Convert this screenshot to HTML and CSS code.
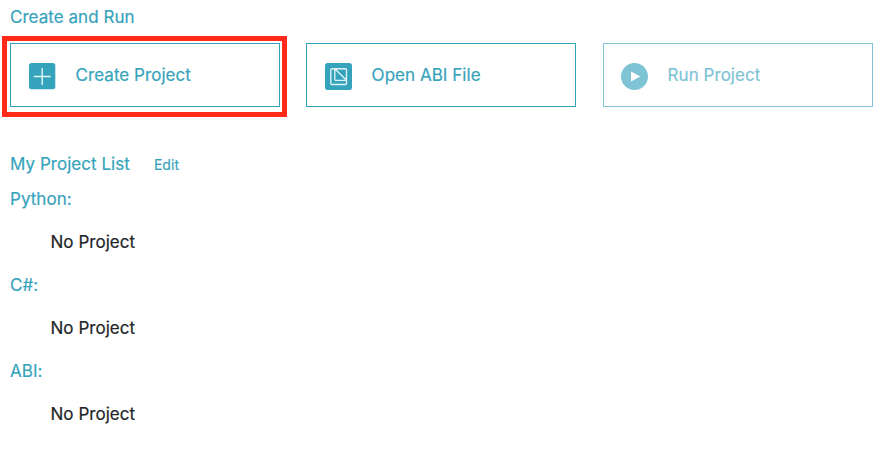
FILE: index.html
```html
<!DOCTYPE html>
<html lang="en">
<head>
<meta charset="utf-8">
<title>Projects</title>
<link rel="stylesheet" href="styles.css">
</head>
<body>
<main class="page">
  <h2 class="heading">Create and Run</h2>
  <div class="actions">
    <button class="card highlighted">
      <svg class="icon" viewBox="0 0 27 27"><rect width="26.3" height="26.3" rx="2.5" fill="#36a3bc"/><path d="M13.2 5v17M4.7 13.5h17" stroke="#e4f5f8" stroke-width="1.4" fill="none"/></svg>
      <span class="label">Create Project</span>
    </button>
    <button class="card">
      <svg class="icon" viewBox="0 0 27 27"><rect width="27" height="27" rx="2.8" fill="#36a3bc"/><path d="M9.8 5.7H7a1.2 1.2 0 0 0-1.2 1.2V20.3a1.2 1.2 0 0 0 1.2 1.2H20.3a1.2 1.2 0 0 0 1.2-1.2V17.3M9.8 5.7H20.3a1.2 1.2 0 0 1 1.2 1.2V17.3H11a1.2 1.2 0 0 1-1.2-1.2zM9.8 5.7L21.5 17.3" stroke="#e0f4f7" stroke-width="1.35" fill="none"/></svg>
      <span class="label">Open ABI File</span>
    </button>
    <button class="card disabled" disabled>
      <svg class="icon" viewBox="0 0 27 27"><circle cx="13.5" cy="13.5" r="13.5" fill="#7ec4d4"/><path d="M10 8.6v9.8l9.3-4.9z" fill="#fff"/></svg>
      <span class="label">Run Project</span>
    </button>
  </div>
  <div class="list-head">
    <h2 class="heading">My Project List</h2>
    <a class="edit">Edit</a>
  </div>
  <section class="group">
    <h3 class="heading">Python:</h3>
    <p class="empty">No Project</p>
  </section>
  <section class="group">
    <h3 class="heading">C#:</h3>
    <p class="empty">No Project</p>
  </section>
  <section class="group">
    <h3 class="heading">ABI:</h3>
    <p class="empty">No Project</p>
  </section>
</main>
</body>
</html>
```
FILE: styles.css
```css
* { box-sizing: border-box; }
body {
  margin: 0;
  background: #fff;
  color: #212529;
  font: 400 17px/26px Inter, sans-serif;
  letter-spacing: 0.04px;
  -webkit-text-stroke: 0.2px currentColor;
}
.page { padding: 4px 11px 0 10px; }
.heading {
  margin: 0;
  font: inherit;
  color: #36a3bc;
}
.actions {
  display: grid;
  grid-template-columns: 270px 270px 270px;
  column-gap: 26px;
  margin-top: 13px;
}
.card {
  display: flex;
  align-items: flex-start;
  height: 64px;
  margin: 0;
  padding: 18px 0 0 18px;
  border: 1px solid #36a3bc;
  background: #fff;
  color: #36a3bc;
  font: inherit;
  letter-spacing: inherit;
}
.highlighted { position: relative; }
.highlighted::after {
  content: "";
  position: absolute;
  inset: -8px -8px -11px -9px;
  border: 5px solid #ff2a1a;
}
.icon { width: 27px; height: 27px; margin-top: 1px; flex: none; }
.label { margin-left: 19.6px; }
.disabled {
  margin-left: 1px;
  margin-right: -1px;
  padding-left: 17px;
  border-color: #7ec4d4;
  color: #7ec4d4;
}
.list-head { display: flex; margin-top: 44px; margin-bottom: 9px; }
.edit {
  margin-left: 24px;
  color: #36a3bc;
  font-size: 14px;
  line-height: 28px;
  height: 26px;
}
.group { margin-bottom: 17px; }
.empty { margin: 17px 0 0 40.5px; }
```
